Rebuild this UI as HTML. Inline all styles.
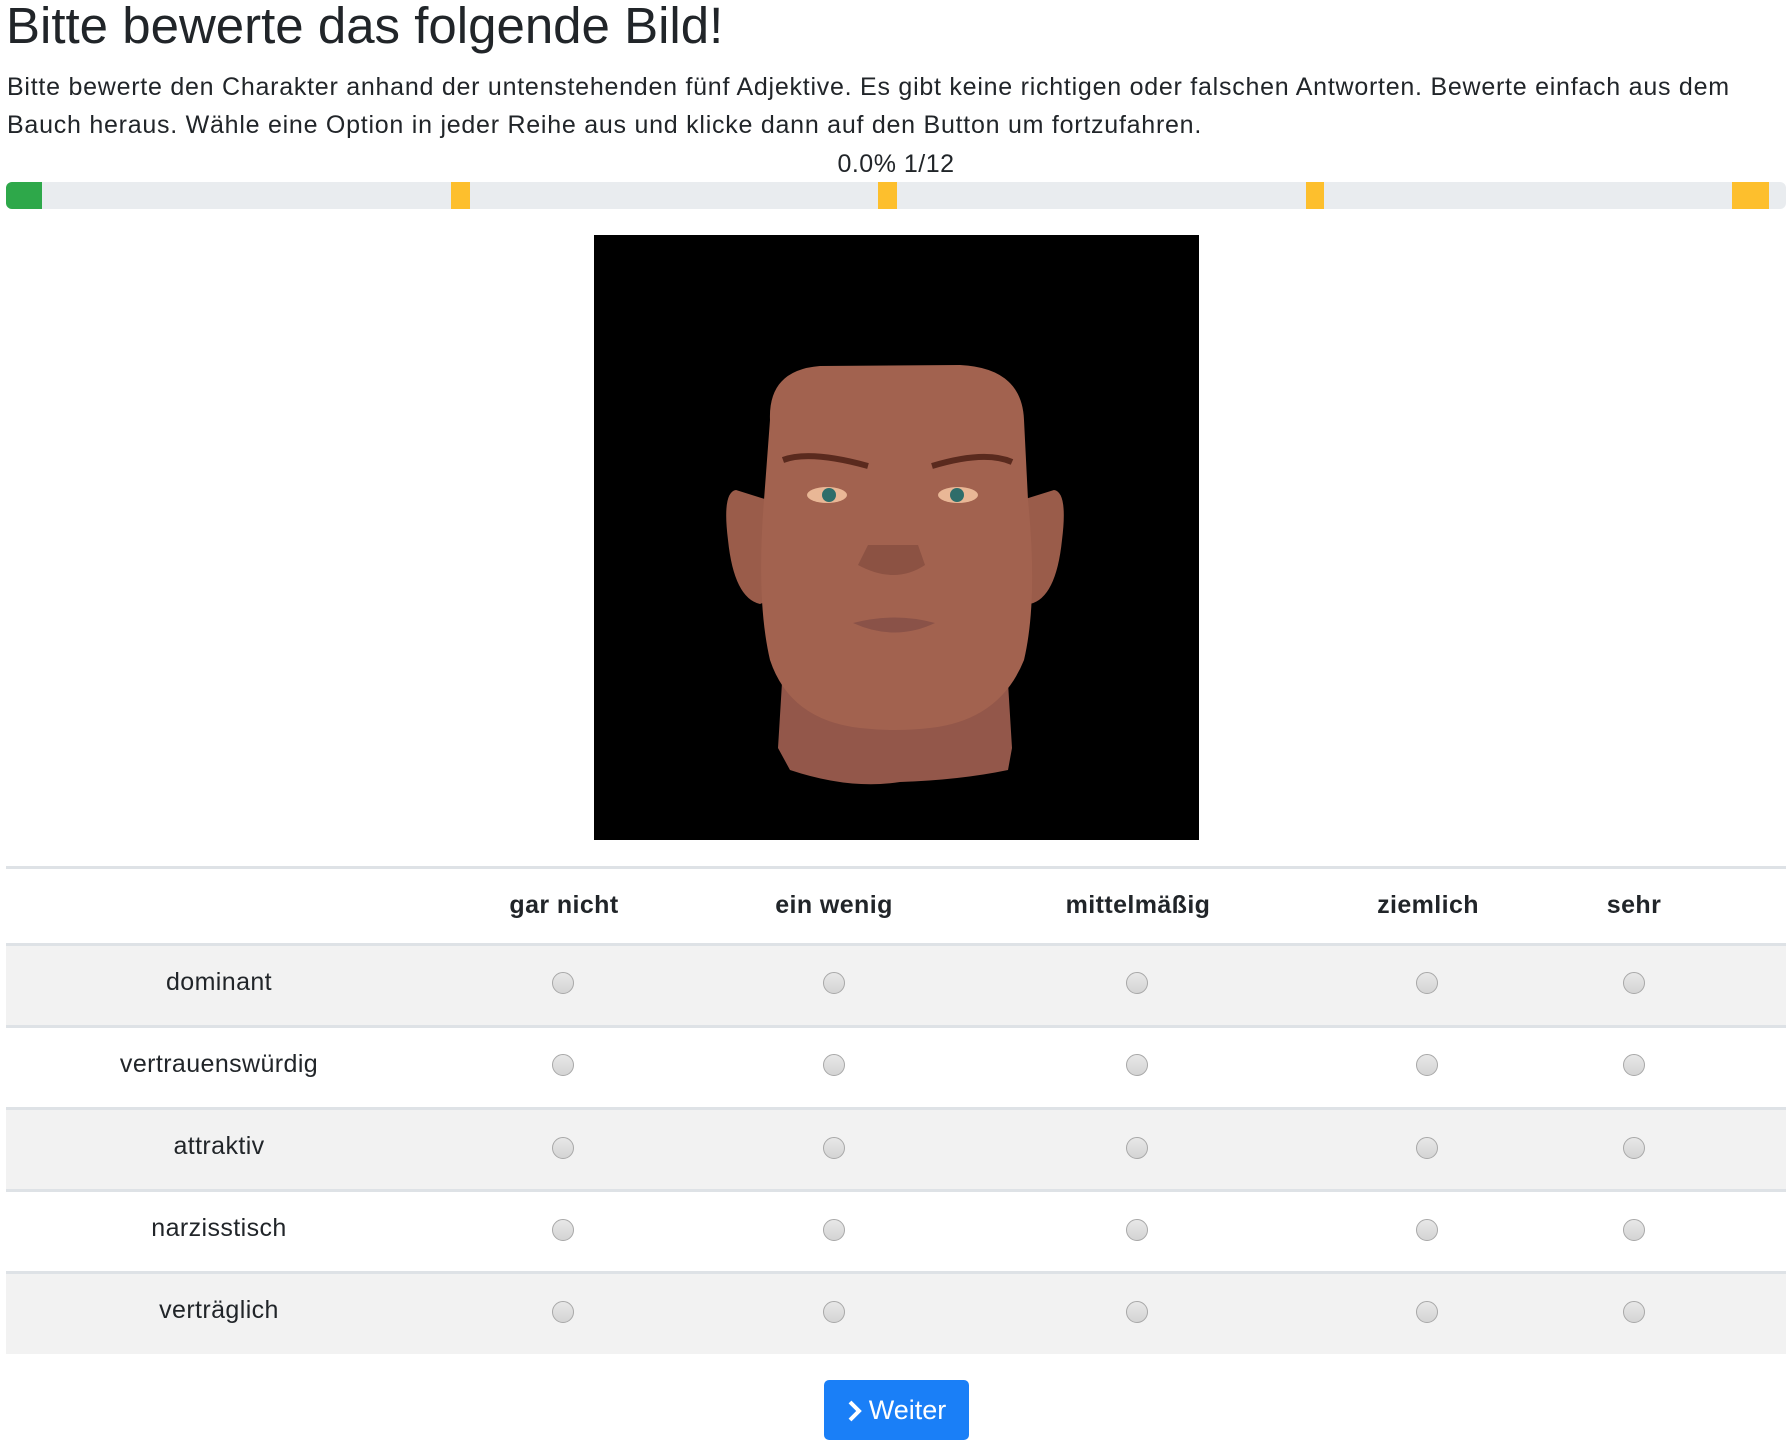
<!DOCTYPE html>
<html><head><meta charset="utf-8"><style>
body{margin:0;width:1792px;height:1444px;background:#fff;font-family:"Liberation Sans",Arial,sans-serif;color:#212529;position:relative;overflow:hidden}
.a{position:absolute}
h1{position:absolute;left:6px;top:-4px;margin:0;font-size:51px;font-weight:400;letter-spacing:0px;white-space:nowrap}
p{position:absolute;left:7px;top:68px;margin:0;font-size:25px;letter-spacing:0.75px;line-height:38px;width:1785px}
.bar{left:6px;top:182px;width:1780px;height:27px;background:#e9ecef;border-radius:6px;overflow:hidden}
.y{position:absolute;top:0;height:27px;background:#fdbf2d}
.line{left:6px;width:1780px;height:3px;background:#dee2e6}
.row{left:6px;width:1780px;height:79px;background:#f2f2f2}
.t{position:absolute;font-size:25px;letter-spacing:0.4px;transform:translateX(-50%);white-space:nowrap}
.h{font-weight:700}
.r{position:absolute;width:20px;height:20px;border-radius:50%;border:1.5px solid #a8a8a8;background:linear-gradient(#e8e8e8,#d4d4d4);transform:translate(-50%,-50%)}
.btn{left:824px;top:1380px;width:145px;height:60px;background:#1a7ff7;border-radius:5px;color:#fff;font-size:27px;line-height:60px;text-align:center}
</style></head><body>
<h1>Bitte bewerte das folgende Bild!</h1>
<p>Bitte bewerte den Charakter anhand der untenstehenden fünf Adjektive. Es gibt keine richtigen oder falschen Antworten. Bewerte einfach aus dem Bauch heraus. Wähle eine Option in jeder Reihe aus und klicke dann auf den Button um fortzufahren.</p>
<div class="a" style="left:0;width:1792px;text-align:center;top:150px;font-size:25px;letter-spacing:0.5px">0.0% 1/12</div>
<div class="a bar">
<div class="y" style="left:0;width:36px;background:#2ea84a"></div>
<div class="y" style="left:445px;width:19px"></div>
<div class="y" style="left:872px;width:19px"></div>
<div class="y" style="left:1300px;width:18px"></div>
<div class="y" style="left:1726px;width:37px"></div>
</div>
<svg class="a" style="left:594px;top:235px" width="605" height="605" viewBox="594 235 605 605">
<rect x="594" y="235" width="605" height="605" fill="#000"/>
<path d="M736 490 Q722 492 728 540 Q734 598 760 604 L770 600 L768 500 Z" fill="#9a5c4a"/>
<path d="M1054 490 Q1068 492 1062 540 Q1056 598 1030 604 L1020 600 L1022 500 Z" fill="#9a5c4a"/>
<path d="M784 650 L778 748 L790 770 Q850 790 900 782 Q960 780 1008 770 L1012 748 L1006 650 Z" fill="#93574a"/>
<path d="M770 420 Q768 370 820 366 L960 365 Q1022 368 1024 420 L1028 500 Q1038 600 1024 660 Q1000 720 930 728 Q895 732 860 728 Q790 720 770 660 Q756 600 764 500 Z" fill="#a2624f"/>
<path d="M783 460 Q810 450 868 466 M932 466 Q985 450 1012 462" stroke="#5a2a1e" stroke-width="6" fill="none"/>
<ellipse cx="827" cy="495" rx="20" ry="8" fill="#e9b796"/><circle cx="829" cy="495" r="7" fill="#2e6d6a"/>
<ellipse cx="958" cy="495" rx="20" ry="8" fill="#e9b796"/><circle cx="957" cy="495" r="7" fill="#2e6d6a"/>
<path d="M858 565 Q895 585 925 565 L918 545 L868 545 Z" fill="#8c5243"/>
<path d="M853 623 Q895 612 935 623 Q895 642 853 623 Z" fill="#8a5248"/>
</svg>
<div class="a line" style="top:866px"></div>
<div class="t h" style="left:564px;top:891px">gar nicht</div>
<div class="t h" style="left:834px;top:891px">ein wenig</div>
<div class="t h" style="left:1138px;top:891px">mittelmäßig</div>
<div class="t h" style="left:1428px;top:891px">ziemlich</div>
<div class="t h" style="left:1634px;top:891px">sehr</div>
<div class="a line" style="top:943px"></div>
<div class="a row" style="top:946px"></div>
<div class="a line" style="top:1025px"></div>
<div class="a line" style="top:1107px"></div>
<div class="a row" style="top:1110px"></div>
<div class="a line" style="top:1189px"></div>
<div class="a line" style="top:1271px"></div>
<div class="a row" style="top:1274px;height:80px"></div>
<div class="t" style="left:219px;top:968px">dominant</div>
<div class="t" style="left:219px;top:1050px">vertrauenswürdig</div>
<div class="t" style="left:219px;top:1132px">attraktiv</div>
<div class="t" style="left:219px;top:1214px">narzisstisch</div>
<div class="t" style="left:219px;top:1296px">verträglich</div>
<div class="r" style="left:563px;top:983px"></div><div class="r" style="left:834px;top:983px"></div><div class="r" style="left:1137px;top:983px"></div><div class="r" style="left:1427px;top:983px"></div><div class="r" style="left:1634px;top:983px"></div>
<div class="r" style="left:563px;top:1065px"></div><div class="r" style="left:834px;top:1065px"></div><div class="r" style="left:1137px;top:1065px"></div><div class="r" style="left:1427px;top:1065px"></div><div class="r" style="left:1634px;top:1065px"></div>
<div class="r" style="left:563px;top:1148px"></div><div class="r" style="left:834px;top:1148px"></div><div class="r" style="left:1137px;top:1148px"></div><div class="r" style="left:1427px;top:1148px"></div><div class="r" style="left:1634px;top:1148px"></div>
<div class="r" style="left:563px;top:1230px"></div><div class="r" style="left:834px;top:1230px"></div><div class="r" style="left:1137px;top:1230px"></div><div class="r" style="left:1427px;top:1230px"></div><div class="r" style="left:1634px;top:1230px"></div>
<div class="r" style="left:563px;top:1312px"></div><div class="r" style="left:834px;top:1312px"></div><div class="r" style="left:1137px;top:1312px"></div><div class="r" style="left:1427px;top:1312px"></div><div class="r" style="left:1634px;top:1312px"></div>
<div class="a btn"><svg width="16" height="22" viewBox="0 0 16 22" style="vertical-align:-3px;margin-right:6px"><path d="M3 2 L12 11 L3 20" stroke="#fff" stroke-width="4" fill="none"/></svg>Weiter</div>
</body></html>
